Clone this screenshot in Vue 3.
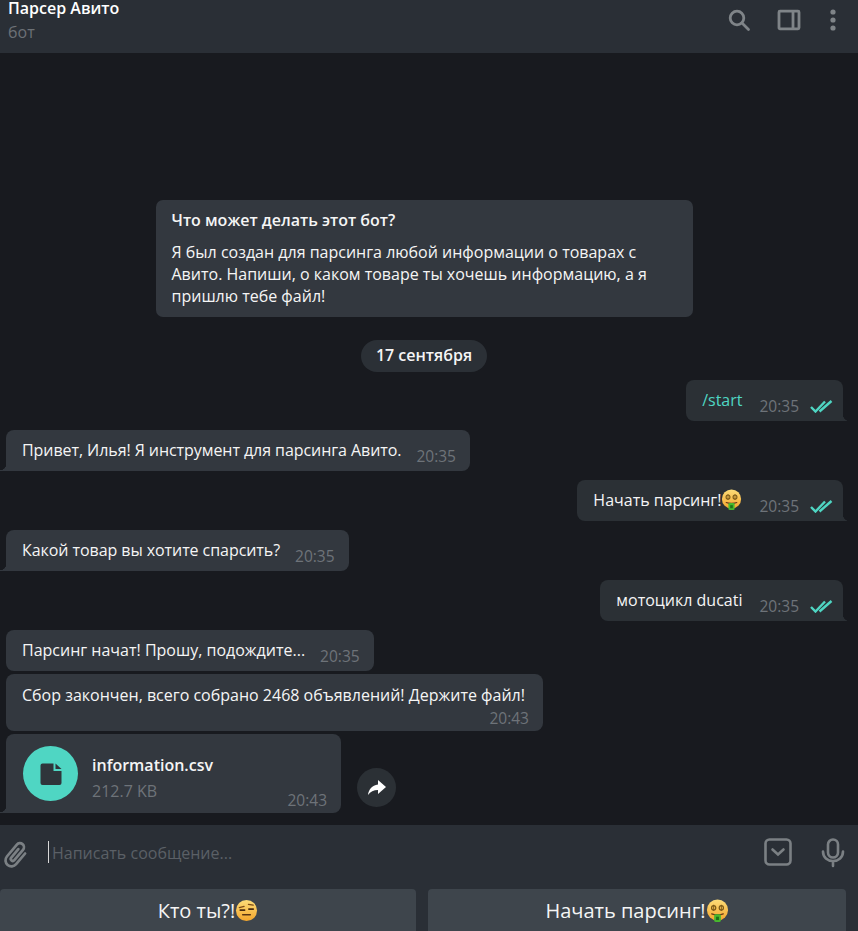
<template>
  <div class="app">
    <header class="top">
      <div class="peer">
        <div class="peer-name">Парсер Авито</div>
        <div class="peer-status">бот</div>
      </div>
      <div class="top-icons">
        <svg class="ic-search" width="24" height="24" viewBox="0 0 24 24" fill="none" stroke="#7f8488" stroke-width="2.8">
          <circle cx="10" cy="10" r="6.8" />
          <path d="M15 15l6.500 6.500" stroke-linecap="round" />
        </svg>
        <svg class="ic-side" width="24" height="24" viewBox="0 0 24 24" fill="none" stroke="#7f8488" stroke-width="2.8">
          <rect x="2" y="3.200" width="20" height="17.600" rx="1" />
          <path d="M16 3.200v17.600" />
        </svg>
        <svg class="ic-more" width="8" height="22" viewBox="0 0 8 22" fill="#7f8488">
          <circle cx="4" cy="3" r="2.600" />
          <circle cx="4" cy="11" r="2.600" />
          <circle cx="4" cy="19" r="2.600" />
        </svg>
      </div>
    </header>

    <main class="chat">
      <section class="about">
        <h4>Что может делать этот бот?</h4>
        <p>Я был создан для парсинга любой информации о товарах с Авито. Напиши, о каком товаре ты хочешь информацию, а я пришлю тебе файл!</p>
      </section>
      <div class="date">17 сентября</div>

      <div class="msg out"><span class="cmd">/start</span><span class="time">20:35</span><svg class="ticks" width="24" height="14" viewBox="0 0 24 14" fill="none" stroke="#4fd6c3" stroke-width="2.400"><path d="M1 8l4.500 4.500L15 2.500" /><path d="M9.500 12.500L21.500 2" /></svg></div>
      <div class="msg in tight">Привет, Илья! Я инструмент для парсинга Авито.<span class="time">20:35</span></div>
      <div class="msg out">Начать парсинг!<svg class="emoji" width="21" height="21" viewBox="0 0 24 24"><use href="#money" /></svg><span class="time">20:35</span><svg class="ticks" width="24" height="14" viewBox="0 0 24 14" fill="none" stroke="#4fd6c3" stroke-width="2.400"><path d="M1 8l4.500 4.500L15 2.500" /><path d="M9.500 12.500L21.500 2" /></svg></div>
      <div class="msg in tight">Какой товар вы хотите спарсить?<span class="time">20:35</span></div>
      <div class="msg out">мотоцикл ducati<span class="time">20:35</span><svg class="ticks" width="24" height="14" viewBox="0 0 24 14" fill="none" stroke="#4fd6c3" stroke-width="2.400"><path d="M1 8l4.500 4.500L15 2.500" /><path d="M9.500 12.500L21.500 2" /></svg></div>

      <div class="msg in no-tail">Парсинг начат! Прошу, подождите...<span class="time">20:35</span></div>
      <div class="msg in stack no-tail">
        <div>Сбор закончен, всего собрано 2468 объявлений! Держите файл!</div>
        <div class="time-row"><span class="time">20:43</span></div>
      </div>
      <div class="file-row">
        <div class="msg in file">
          <div class="file-ic">
            <svg width="24" height="24" viewBox="0 0 24 24">
              <path d="M4 1.500h10.500v7.500H22.500v12a2 2 0 0 1-2 2H3.500a2 2 0 0 1-2-2V3.500a2 2 0 0 1 2-2z" fill="#2f353b" />
              <path d="M16.500 1.500l6 5.500h-6z" fill="#2f353b" />
            </svg>
          </div>
          <div class="file-info">
            <div class="file-name">information.csv</div>
            <div class="file-size">212.7 KB</div>
          </div>
          <span class="time file-time">20:43</span>
        </div>
        <button class="share">
          <svg width="20" height="18" viewBox="0 0 20 18" fill="#fff"><path d="M11 1l8 7-8 7v-4C6.500 11 3.500 12.500 1 16c.6-5.500 4-9.500 10-10.500z" /></svg>
        </button>
      </div>
    </main>

    <div class="composer">
      <svg class="clip" width="28" height="30" viewBox="0 0 28 30" fill="none" stroke="#7b8084" stroke-width="2.700" stroke-linecap="round">
        <path transform="rotate(40 14 15)" d="M20 8V22a6 6 0 0 1-12 0V6.500a4 4 0 0 1 8 0V20a2 2 0 0 1-4 0V9" />
      </svg>
      <div class="input"><span class="caret"></span>Написать сообщение...</div>
      <svg class="kb" width="28" height="28" viewBox="0 0 28 28" fill="none" stroke="#7b8084" stroke-width="2.600">
        <rect x="1.500" y="1.500" width="25" height="25" rx="4" />
        <path d="M8.500 11.500l5.500 5 5.500-5" stroke-linecap="round" />
      </svg>
      <svg class="mic" width="24" height="30" viewBox="0 0 24 30" fill="none" stroke="#7b8084" stroke-width="2.600" stroke-linecap="round">
        <rect x="7" y="1.500" width="10" height="18" rx="5" />
        <path d="M2 13.500c0 6 4.500 9.500 10 9.500s10-3.500 10-9.500M12 23v5" />
      </svg>
    </div>

    <div class="keyboard">
      <button class="kbtn">Кто ты?!<svg class="emoji" width="23" height="23" viewBox="0 0 24 24"><use href="#raised" /></svg></button>
      <button class="kbtn">Начать парсинг!<svg class="emoji" width="23" height="23" viewBox="0 0 24 24"><use href="#money" /></svg></button>
    </div>

    <!-- emoji -->
    <svg class="defs" width="0" height="0">
      <defs>
        <linearGradient id="face" x1="0" y1="0" x2="0" y2="1">
          <stop offset="0" stop-color="#fcdc78" />
          <stop offset="1" stop-color="#f4a62c" />
        </linearGradient>
        <symbol id="money" viewBox="0 0 24 24">
          <circle cx="12" cy="11.500" r="11" fill="url(#face)" />
          <path d="M8 6v6.500M16 6v6.500" stroke="#7c5a18" stroke-width="1" />
          <ellipse cx="8" cy="9.200" rx="2.200" ry="2.400" fill="none" stroke="#7c5a18" stroke-width="1.300" />
          <ellipse cx="16" cy="9.200" rx="2.200" ry="2.400" fill="none" stroke="#7c5a18" stroke-width="1.300" />
          <path d="M6 15.500c3 1.300 9 1.300 12 0" stroke="#6b3a1a" stroke-width="1.400" fill="none" stroke-linecap="round" />
          <rect x="8.500" y="16" width="7" height="8" rx="1.500" fill="#48b82e" />
          <rect x="10.500" y="18.500" width="3" height="3.500" fill="#1f6f1a" />
        </symbol>
        <symbol id="raised" viewBox="0 0 24 24">
          <circle cx="12" cy="12" r="11" fill="url(#face)" />
          <path d="M4.500 9l5-1.200M14 5.500l5 1" stroke="#7a4a17" stroke-width="1.300" fill="none" stroke-linecap="round" />
          <path d="M5.500 11.500h4.500M14.500 10.500h4.500" stroke="#4a2c10" stroke-width="1.800" stroke-linecap="round" />
          <path d="M8 16.500h8" stroke="#5a3512" stroke-width="1.500" stroke-linecap="round" />
        </symbol>
      </defs>
    </svg>
  </div>
</template>

<script setup>
</script>

<style>
html, body {
  margin: 0;
  background: #181a1f;
}
</style>

<style scoped>
.app {
  width: 858px;
  height: 931px;
  overflow: hidden;
  display: flex;
  flex-direction: column;
  background: #181a1f;
  color: #f5f5f5;
  font-family: "Open Sans", "Noto Sans", sans-serif;
  font-size: 16px;
}
.top {
  height: 53px;
  flex: none;
  background: #2a2f36;
  display: flex;
  justify-content: space-between;
  padding: 0 21px 0 8px;
  box-sizing: border-box;
}
.peer-name {
  font-weight: 600;
  font-size: 16px;
  line-height: 16px;
  color: #fff;
}
.peer-status {
  margin-top: 8px;
  font-size: 16px;
  line-height: 16px;
  color: #6c7176;
}
.top-icons {
  display: flex;
  align-items: center;
  gap: 26px;
  padding-bottom: 13px;
}
.top-icons .ic-more {
  margin-left: 2px;
}
.chat {
  flex: 1;
  display: flex;
  flex-direction: column;
  align-items: flex-start;
  padding: 147px 15px 0 6px;
  box-sizing: border-box;
}
.about {
  align-self: center;
  margin-left: -1px;
  width: 537px;
  height: 117px;
  box-sizing: border-box;
  background: #33383f;
  border-radius: 7px;
  padding: 10px 16px;
}
.about h4 {
  margin: 0;
  font-size: 16px;
  font-weight: 600;
  line-height: 21px;
}
.about p {
  margin: 10px 0 0;
  line-height: 22px;
}
.date {
  align-self: center;
  margin: 23px 0 8px -1px;
  height: 32px;
  line-height: 30px;
  padding: 0 15px;
  border-radius: 16px;
  background: #2b3036;
  font-weight: 600;
}
.msg {
  position: relative;
  box-sizing: border-box;
  height: 41px;
  line-height: 40px;
  padding: 0 14px 0 16px;
  margin-bottom: 9px;
  border-radius: 8px;
  white-space: nowrap;
  display: flex;
  align-items: flex-start;
}
.tight {
  letter-spacing: -0.065px;
}
.msg.in {
  background: #33383f;
  border-bottom-left-radius: 0;
}
.msg.in::before {
  content: "";
  position: absolute;
  left: -6px;
  bottom: 0;
  width: 6px;
  height: 7px;
  background: radial-gradient(circle at 0 0, transparent 6px, #33383f 6.500px);
}
.msg.in.no-tail {
  margin-bottom: 3px;
  border-bottom-left-radius: 8px;
}
.msg.in.no-tail::before {
  display: none;
}
.msg.out {
  align-self: flex-end;
  background: #2b3035;
  border-bottom-right-radius: 0;
  padding: 0 9px 0 16px;
}
.msg.out::after {
  content: "";
  position: absolute;
  right: -7px;
  bottom: 0;
  width: 7px;
  height: 7px;
  background: radial-gradient(circle at 100% 0, transparent 7px, #2b3035 7.500px);
}
.msg.out .time {
  margin-left: 17px;
}
.cmd {
  color: #4fd6c3;
}
.time {
  margin-left: 15px;
  color: #6e7379;
  line-height: 16px;
  margin-top: 18px;
  font-size: 15.500px;
  letter-spacing: 0;
}
.ticks {
  margin: 19px 0 0 11px;
}
.emoji {
  margin-top: 9px;
  flex: none;
}
.stack {
  display: block;
  height: 57px;
  padding-right: 18px;
}
.stack > div:first-child {
  line-height: 42px;
  height: 36px;
}
.time-row {
  display: flex;
  justify-content: flex-end;
  line-height: 16px;
  margin-right: -4px;
}
.time-row .time {
  margin-top: 0;
}
.file-row {
  display: flex;
  align-items: center;
  gap: 16px;
}
.file {
  width: 335px;
  height: 79px;
  margin: 0;
  padding: 12px 14px 0 17px;
  line-height: normal;
}
.file-ic {
  width: 55px;
  height: 55px;
  border-radius: 50%;
  background: #4fd6c3;
  flex: none;
  display: flex;
  align-items: center;
  justify-content: center;
}
.file-info {
  margin-left: 14px;
  padding-top: 8px;
}
.file-name {
  font-weight: 600;
  line-height: 22px;
}
.file-size {
  margin-top: 4px;
  color: #6e7379;
  line-height: 22px;
}
.file-time {
  position: absolute;
  right: 14px;
  bottom: 5px;
  margin: 0;
}
.share {
  width: 39px;
  height: 39px;
  margin-top: 28px;
  border: 0;
  padding: 0;
  border-radius: 50%;
  background: #2b3035;
  display: flex;
  align-items: center;
  justify-content: center;
}
.composer {
  flex: none;
  height: 64px;
  background: #2a2f36;
  display: flex;
  align-items: flex-start;
  padding: 0 13px 0 2px;
  box-sizing: border-box;
}
.clip {
  margin-top: 15px;
}
.input {
  flex: 1;
  margin: 17px 0 0 18px;
  height: 23px;
  line-height: 23px;
  color: #5b6066;
  position: relative;
  padding-left: 4px;
}
.caret {
  position: absolute;
  left: 0;
  top: -1px;
  width: 1px;
  height: 22px;
  background: #d8d8d8;
}
.kb {
  margin-top: 13px;
  margin-right: 29px;
}
.mic {
  margin-top: 13px;
}
.keyboard {
  flex: none;
  height: 42px;
  display: grid;
  grid-template-columns: 416px 418px;
  gap: 12px;
  background: #2a2f36;
}
.kbtn {
  border: 0;
  border-radius: 4px 4px 0 0;
  background: #3e454c;
  color: #f5f5f5;
  font-family: inherit;
  font-size: 20px;
  font-weight: 500;
  display: flex;
  align-items: center;
  justify-content: center;
  padding: 0;
}
.kbtn .emoji {
  margin-top: 0;
}
.defs {
  position: absolute;
}
</style>
